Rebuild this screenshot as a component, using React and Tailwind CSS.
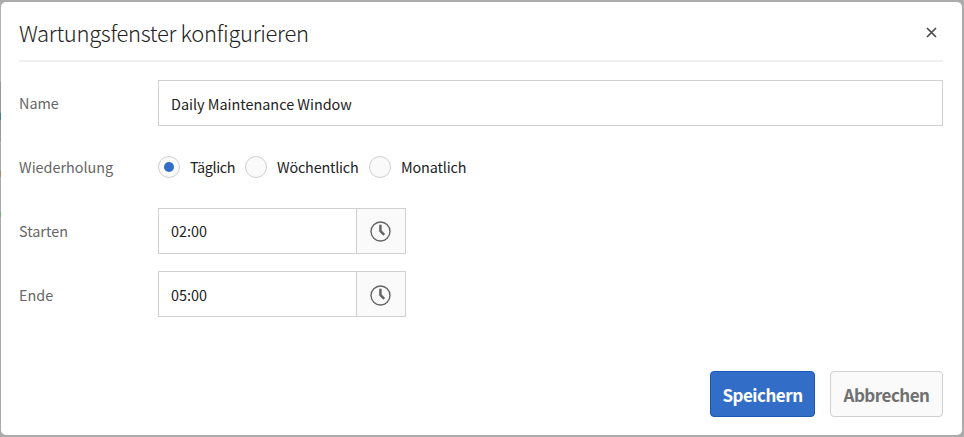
function ClockIcon() {
  return (
    <svg width="22" height="22" viewBox="0 0 22 22" fill="none" stroke="#666">
      <circle cx="10.5" cy="11.5" r="9.5" strokeWidth="1.4" />
      <path d="M10.4 4.8V11L14.2 14.8" strokeWidth="2.5" />
    </svg>
  );
}

function Row({ label, height, pad = "pt-0", children }) {
  return (
    <div className={`flex items-center ${height}`}>
      <div className={`w-[139px] shrink-0 text-[#666] ${pad}`}>{label}</div>
      {children}
    </div>
  );
}

function Radio({ label, checked, width }) {
  return (
    <label className={`flex shrink-0 items-center ${width}`}>
      <span className="mr-[10px] flex size-[22px] shrink-0 items-center justify-center rounded-full border border-[#d0d0d0] bg-[#fafafa]">
        {checked && <span className="size-[10px] rounded-full bg-[#326ec8]" />}
      </span>
      <span className="whitespace-nowrap">{label}</span>
    </label>
  );
}

function TimeField({ value, pad = "pt-0" }) {
  return (
    <div className="flex h-[46px] w-[248px] border border-[#d0d0d0]">
      <div className={`flex flex-1 items-center pl-3 ${pad}`}>{value}</div>
      <div className={`flex w-[49px] items-center justify-center border-l border-[#d0d0d0] bg-[#fafafa] ${pad}`}>
        <ClockIcon />
      </div>
    </div>
  );
}

// Dimmed page content that shows along the dialog's left edge.
function PageEdge() {
  return (
    <div className="flex w-px shrink-0 flex-col">
      <div className="h-[80px] bg-[#b2b2b2]" />
      <div className="h-[31px] bg-[#999]" />
      <div className="h-[7px] bg-[#4d7a91]" />
      <div className="h-[22px] bg-[#999]" />
      <div className="h-[29px]" />
      <div className="h-[6px] bg-[#aa875f]" />
      <div className="h-[35px]" />
      <div className="h-[5px] bg-[#72b36a]" />
    </div>
  );
}

export default function App() {
  return (
    <div className="h-[437px] w-[964px] overflow-hidden bg-[#ababab] pt-[2px] font-['Noto_Sans_CJK_SC','Noto_Sans',sans-serif] text-[14.4px] text-[#222]">
      <div className="flex">
        <PageEdge />
        <div className="flex h-[433px] w-[961px] flex-col rounded-[5px] bg-white pl-[18px] pr-[19px]">
          <div className="flex h-[60px] items-center justify-between border-b-2 border-[#f0f0f0] pt-[4px]">
            <h1 className="pb-[2px] text-[22px] font-light leading-[30px] tracking-[-0.32px]">Wartungsfenster konfigurieren</h1>
            <svg className="mr-[6px] mb-[2px]" width="11" height="11" viewBox="0 0 11 11" fill="none" stroke="#4b4b4b" strokeWidth="1.7">
              <path d="M1 1L10 10M10 1L1 10" />
            </svg>
          </div>
          <div className="flex flex-col pt-[18px]">
            <Row label="Name" height="h-[46px]">
              <div className="flex h-[46px] flex-1 items-center border border-[#d0d0d0] pt-px pl-3">Daily Maintenance Window</div>
            </Row>
            <Row label="Wiederholung" height="h-[82px]">
              <Radio label="Täglich" checked width="w-[87px] tracking-[-0.4px]" />
              <Radio label="Wöchentlich" width="w-[124px] tracking-[-0.2px]" />
              <Radio label="Monatlich" width="w-[110px] tracking-[-0.15px]" />
            </Row>
            <Row label="Starten" height="h-[46px]">
              <TimeField value="02:00" />
            </Row>
            <div className="h-[17px]" />
            <Row label="Ende" height="h-[46px]" pad="pt-px">
              <TimeField value="05:00" pad="pt-px" />
            </Row>
          </div>
          <div className="mt-auto mb-[18px] flex justify-end gap-[15px] text-[17px] font-bold tracking-[-0.5px]">
            <button className="h-[46px] w-[105px] rounded-[4px] border border-[#1a57b8] bg-[#326ec8] pt-px text-white">Speichern</button>
            <button className="h-[46px] w-[113px] rounded-[4px] border border-[#d0d0d0] bg-[#fafafa] pt-px text-[#707070]">Abbrechen</button>
          </div>
        </div>
      </div>
    </div>
  );
}
